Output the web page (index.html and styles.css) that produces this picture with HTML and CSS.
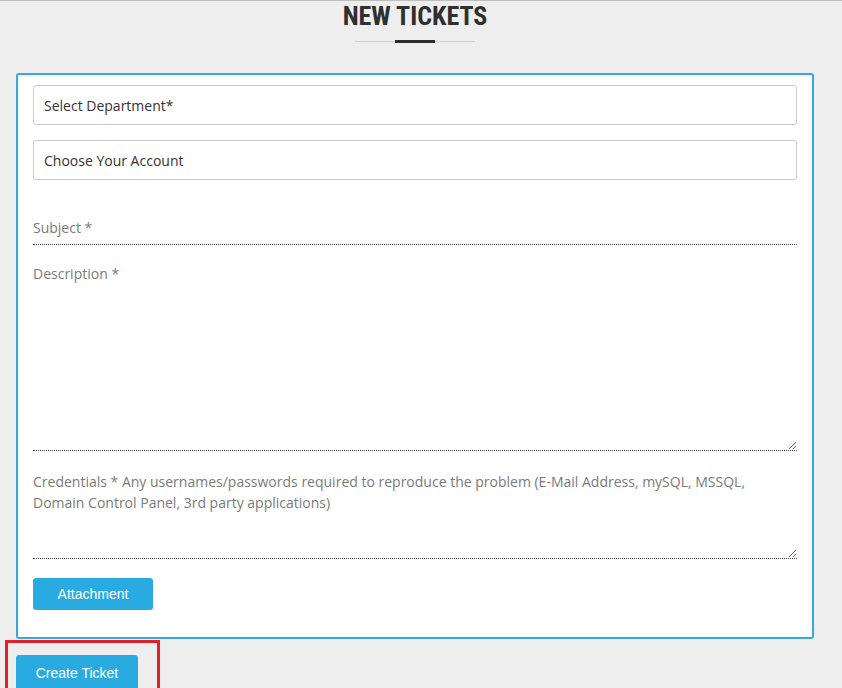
FILE: index.html
```html
<!DOCTYPE html>
<html lang="en">
<head>
    <meta charset="UTF-8">
    <title>New Tickets</title>
    <link rel="stylesheet" href="styles.css">
</head>
<body>
<div class="page">
    <div class="heading">
        <h1>NEW TICKETS</h1>
        <div class="divider"><span></span></div>
    </div>
    <form class="ticket-card" id="ticket-form">
        <select class="field-box" id="department">
            <option>Select Department*</option>
        </select>
        <select class="field-box" id="account">
            <option>Choose Your Account</option>
        </select>
        <input type="text" class="field-line subject" placeholder="Subject *">
        <textarea class="field-line description" placeholder="Description *"></textarea>
        <textarea class="field-line credentials" placeholder="Credentials * Any usernames/passwords required to reproduce the problem (E-Mail Address, mySQL, MSSQL, Domain Control Panel, 3rd party applications)"></textarea>
        <button type="button" class="btn attach">Attachment</button>
    </form>
</div>
<div class="submit-wrap">
    <button type="submit" form="ticket-form" class="btn create">Create Ticket</button>
</div>
</body>
</html>
```

FILE: styles.css
```css
body { margin: 0; background: #eeeeee; border-top: 1px solid #bdbdbd; font-family: "Open Sans", Arial, sans-serif; }
.page { width: 798px; margin-left: 16px; }
.heading { text-align: center; padding-top: 1px; }
h1 { margin: 0; font-family: "Roboto Condensed", "Liberation Sans Narrow", "DejaVu Sans Condensed", Roboto, sans-serif; font-stretch: condensed; font-weight: 700; font-size: 26px; line-height: 28px; color: #2f2f2f; }
.divider { width: 120px; height: 1px; background: #cfcfcf; margin: 11px auto 0; display: flex; justify-content: center; align-items: center; }
.divider span { width: 40px; height: 3px; background: #2b2b2b; }
.ticket-card { margin-top: 31px; background: #fff; border: 2px solid #36a9dc; border-radius: 3px; padding: 10px 15px 27px; display: flex; flex-direction: column; align-items: flex-start; }
.field-box { width: 100%; height: 40px; margin-bottom: 15px; padding: 0 10px; border: 1px solid #cccccc; border-radius: 3px; background: #fff; font-family: inherit; font-size: 14px; color: #333; appearance: none; -webkit-appearance: none; }
.field-line { width: 100%; box-sizing: border-box; border: none; border-bottom: 1px dotted #444; padding: 6px 0; font-family: inherit; font-size: 14px; line-height: 21px; color: #333; outline: none; background: transparent; }
.field-line::placeholder { color: #7a7a7a; }
.subject { margin-top: 16px; height: 34px; }
.description { margin-top: 14px; height: 192px; padding-top: 4px; resize: vertical; }
.credentials { margin-top: 16px; height: 92px; padding-top: 4px; resize: vertical; }
.btn { border: none; border-radius: 3px; background: #29abe2; color: #fff; font-family: Arial, "Liberation Sans", sans-serif; font-size: 14px; cursor: pointer; }
.attach { margin-top: 19px; width: 120px; height: 32px; }
.submit-wrap { margin: 1px 0 0 5px; width: 155px; height: 60px; border: 3px solid #e3202a; border-bottom: none; padding: 12px 0 0 8px; box-sizing: border-box; }
.create { width: 122px; height: 36px; }
```
